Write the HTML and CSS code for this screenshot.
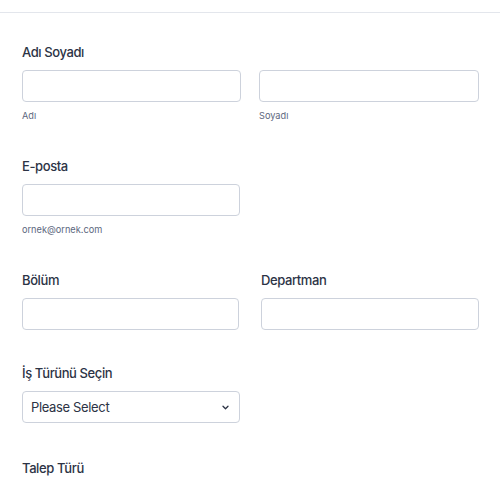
FILE: index.html
```html
<!DOCTYPE html>
<html lang="tr">
<head>
<meta charset="utf-8">
<title>Form</title>
<link rel="stylesheet" href="styles.css">
</head>
<body>
<div class="topbar"></div>
<form class="form">
  <div class="field field-name">
    <label class="label">Adı Soyadı</label>
    <div class="row row-name">
      <div class="col">
        <input class="input" type="text">
        <span class="sublabel">Adı</span>
      </div>
      <div class="col">
        <input class="input" type="text">
        <span class="sublabel">Soyadı</span>
      </div>
    </div>
  </div>

  <div class="field field-email">
    <label class="label">E-posta</label>
    <div class="row">
      <div class="col">
        <input class="input" type="email">
        <span class="sublabel">ornek@ornek.com</span>
      </div>
    </div>
  </div>

  <div class="row row-pair">
    <div class="field field-nosub">
      <label class="label">Bölüm</label>
      <input class="input" type="text">
    </div>
    <div class="field field-nosub">
      <label class="label">Departman</label>
      <input class="input" type="text">
    </div>
  </div>

  <div class="field field-select">
    <label class="label">İş Türünü Seçin</label>
    <div class="row">
      <div class="select">
        <span class="select-text">Please Select</span>
        <svg class="chevron" width="7" height="5" viewBox="0 0 7 5"><path d="M1 1.2l2.5 2.5L6 1.2" fill="none" stroke="#2c3345" stroke-width="1.3" stroke-linecap="round" stroke-linejoin="round"/></svg>
      </div>
    </div>
  </div>

  <div class="field">
    <label class="label">Talep Türü</label>
  </div>
</form>
</body>
</html>
```
FILE: styles.css
```css
* { box-sizing: border-box; }
html, body { margin: 0; padding: 0; background: #fff; }
body {
  font-family: Inter, "Noto Sans", "Liberation Sans", sans-serif;
  color: #2c3345;
}
.topbar {
  height: 13px;
  border-bottom: 1px solid #e3e6ec;
}
.form {
  padding: 28px 22px 0 22px;
  display: flex;
  flex-direction: column;
}
.field {
  display: flex;
  flex-direction: column;
  padding-bottom: 34px;
}
.field-name { padding-bottom: 33px; }
.field-email { padding-bottom: 33px; }
.field-nosub { padding-bottom: 32px; }
.field-select { padding-bottom: 34px; }
.label {
  font-size: 13px;
  letter-spacing: -0.4px;
  line-height: 20px;
  padding-top: 1px;
  font-weight: 500;
  color: #2c3345;
  margin-bottom: 8px;
}
.row {
  display: grid;
  grid-template-columns: 218px;
}
.row-name {
  grid-template-columns: 219px 220px;
  column-gap: 18px;
}
.row-pair {
  display: grid;
  grid-template-columns: 217px 218px;
  column-gap: 22px;
}
.col { display: flex; flex-direction: column; }
.input {
  display: block;
  width: 100%;
  height: 32px;
  margin: 0;
  border: 1px solid #cdd2dc;
  border-radius: 4px;
  background: #fff;
  font: inherit;
  padding: 0 8px;
}
.sublabel {
  margin-top: 8px;
  font-size: 9.2px;
  line-height: 12px;
  color: #5c677e;
}
.select {
  height: 32px;
  border: 1px solid #cdd2dc;
  border-radius: 4px;
  display: flex;
  align-items: center;
  justify-content: space-between;
  padding: 0 10px 0 8px;
}
.select-text {
  font-size: 13px;
  letter-spacing: -0.35px;
  color: #2c3345;
}
.chevron { display: block; }
```
